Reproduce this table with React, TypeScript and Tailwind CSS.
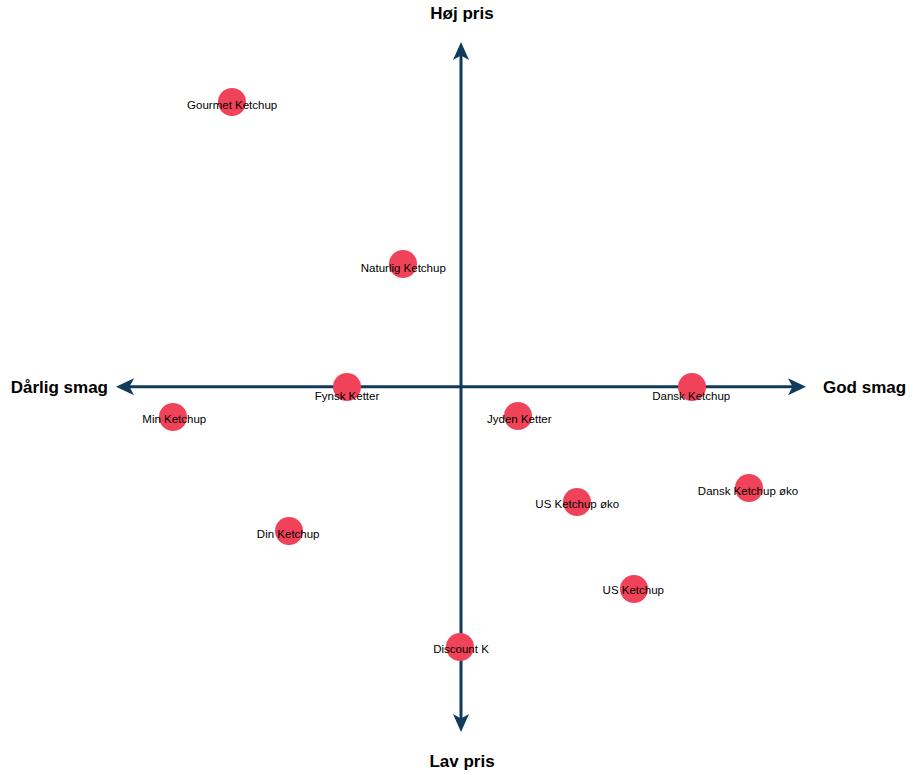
import React from "react"

interface Brand {
  name: string
  x: number
  y: number
  lx: number
  ly: number
}

// dot centre (x, y) and label centre offset (lx, ly), in chart pixels
const brands: Brand[] = [
  { name: "Gourmet Ketchup", x: 115.7, y: 59.7, lx: 0.5, ly: 3 },
  { name: "Naturlig Ketchup", x: 287.3, y: 222, lx: 0, ly: 4.3 },
  { name: "Fynsk Ketter", x: 230.5, y: 344.7, lx: 0.5, ly: 9.5 },
  { name: "Dansk Ketchup", x: 575.7, y: 344.7, lx: -0.5, ly: 9.5 },
  { name: "Min Ketchup", x: 57.3, y: 374.7, lx: 1, ly: 2.7 },
  { name: "Jyden Ketter", x: 402.3, y: 374, lx: 1, ly: 3.3 },
  { name: "Dansk Ketchup øko", x: 633.3, y: 446.3, lx: -1.3, ly: 2.7 },
  { name: "US Ketchup øko", x: 460.7, y: 460.3, lx: 0.5, ly: 1.7 },
  { name: "Din Ketchup", x: 172.7, y: 489, lx: -0.5, ly: 3 },
  { name: "US Ketchup", x: 518, y: 547, lx: -0.7, ly: 0.5 },
  { name: "Discount K", x: 344, y: 604.7, lx: 1, ly: 2.3 },
]

const AXIS = "#103b5b"
const DOT = "#f0435a"

function Axes() {
  return (
    <svg width="690" height="690" viewBox="0 0 690 690" className="absolute inset-0">
      <line x1="345" y1="12" x2="345" y2="678" stroke={AXIS} strokeWidth="3" />
      <line x1="12" y1="344.7" x2="678" y2="344.7" stroke={AXIS} strokeWidth="3" />
      {/* up */}
      <path d="M345 0 L353 18 L345 13.5 L337 18 Z" fill={AXIS} />
      {/* down */}
      <path d="M345 690 L353 672 L345 676.5 L337 672 Z" fill={AXIS} />
      {/* left */}
      <path d="M0 344.7 L18 336.2 L13.5 344.7 L18 353.2 Z" fill={AXIS} />
      {/* right */}
      <path d="M690 344.7 L672 336.2 L676.5 344.7 L672 353.2 Z" fill={AXIS} />
    </svg>
  )
}

export default function App() {
  return (
    <div
      className="grid h-[775px] w-[916px] grid-cols-[116px_690px_110px] grid-rows-[42px_690px_43px] bg-white text-black"
      style={{ fontFamily: '"Liberation Sans", Arial, sans-serif' }}
    >
      <div />
      <div className="flex justify-center pl-[2px] pt-[3px] text-[17px] font-bold leading-[22px]">Høj pris</div>
      <div />

      <div className="flex items-center justify-end pr-[8px] pt-[2px] text-[17px] font-bold">Dårlig smag</div>
      <div className="relative">
        <Axes />
        {brands.map((b) => (
          <div
            key={b.name}
            className="absolute h-[28px] w-[28px] -translate-x-1/2 -translate-y-1/2 rounded-full"
            style={{ left: b.x, top: b.y, backgroundColor: DOT }}
          />
        ))}
        {brands.map((b) => (
          <div
            key={b.name + "-label"}
            className="absolute -translate-x-1/2 -translate-y-1/2 whitespace-nowrap text-[11.5px] leading-[14px]"
            style={{ left: b.x + b.lx, top: b.y + b.ly }}
          >
            {b.name}
          </div>
        ))}
      </div>
      <div className="flex items-center pl-[17px] pt-[2px] text-[17px] font-bold">God smag</div>

      <div />
      <div className="flex justify-center pl-[2px] pt-[19px] text-[17px] font-bold leading-[22px]">Lav pris</div>
      <div />
    </div>
  )
}
